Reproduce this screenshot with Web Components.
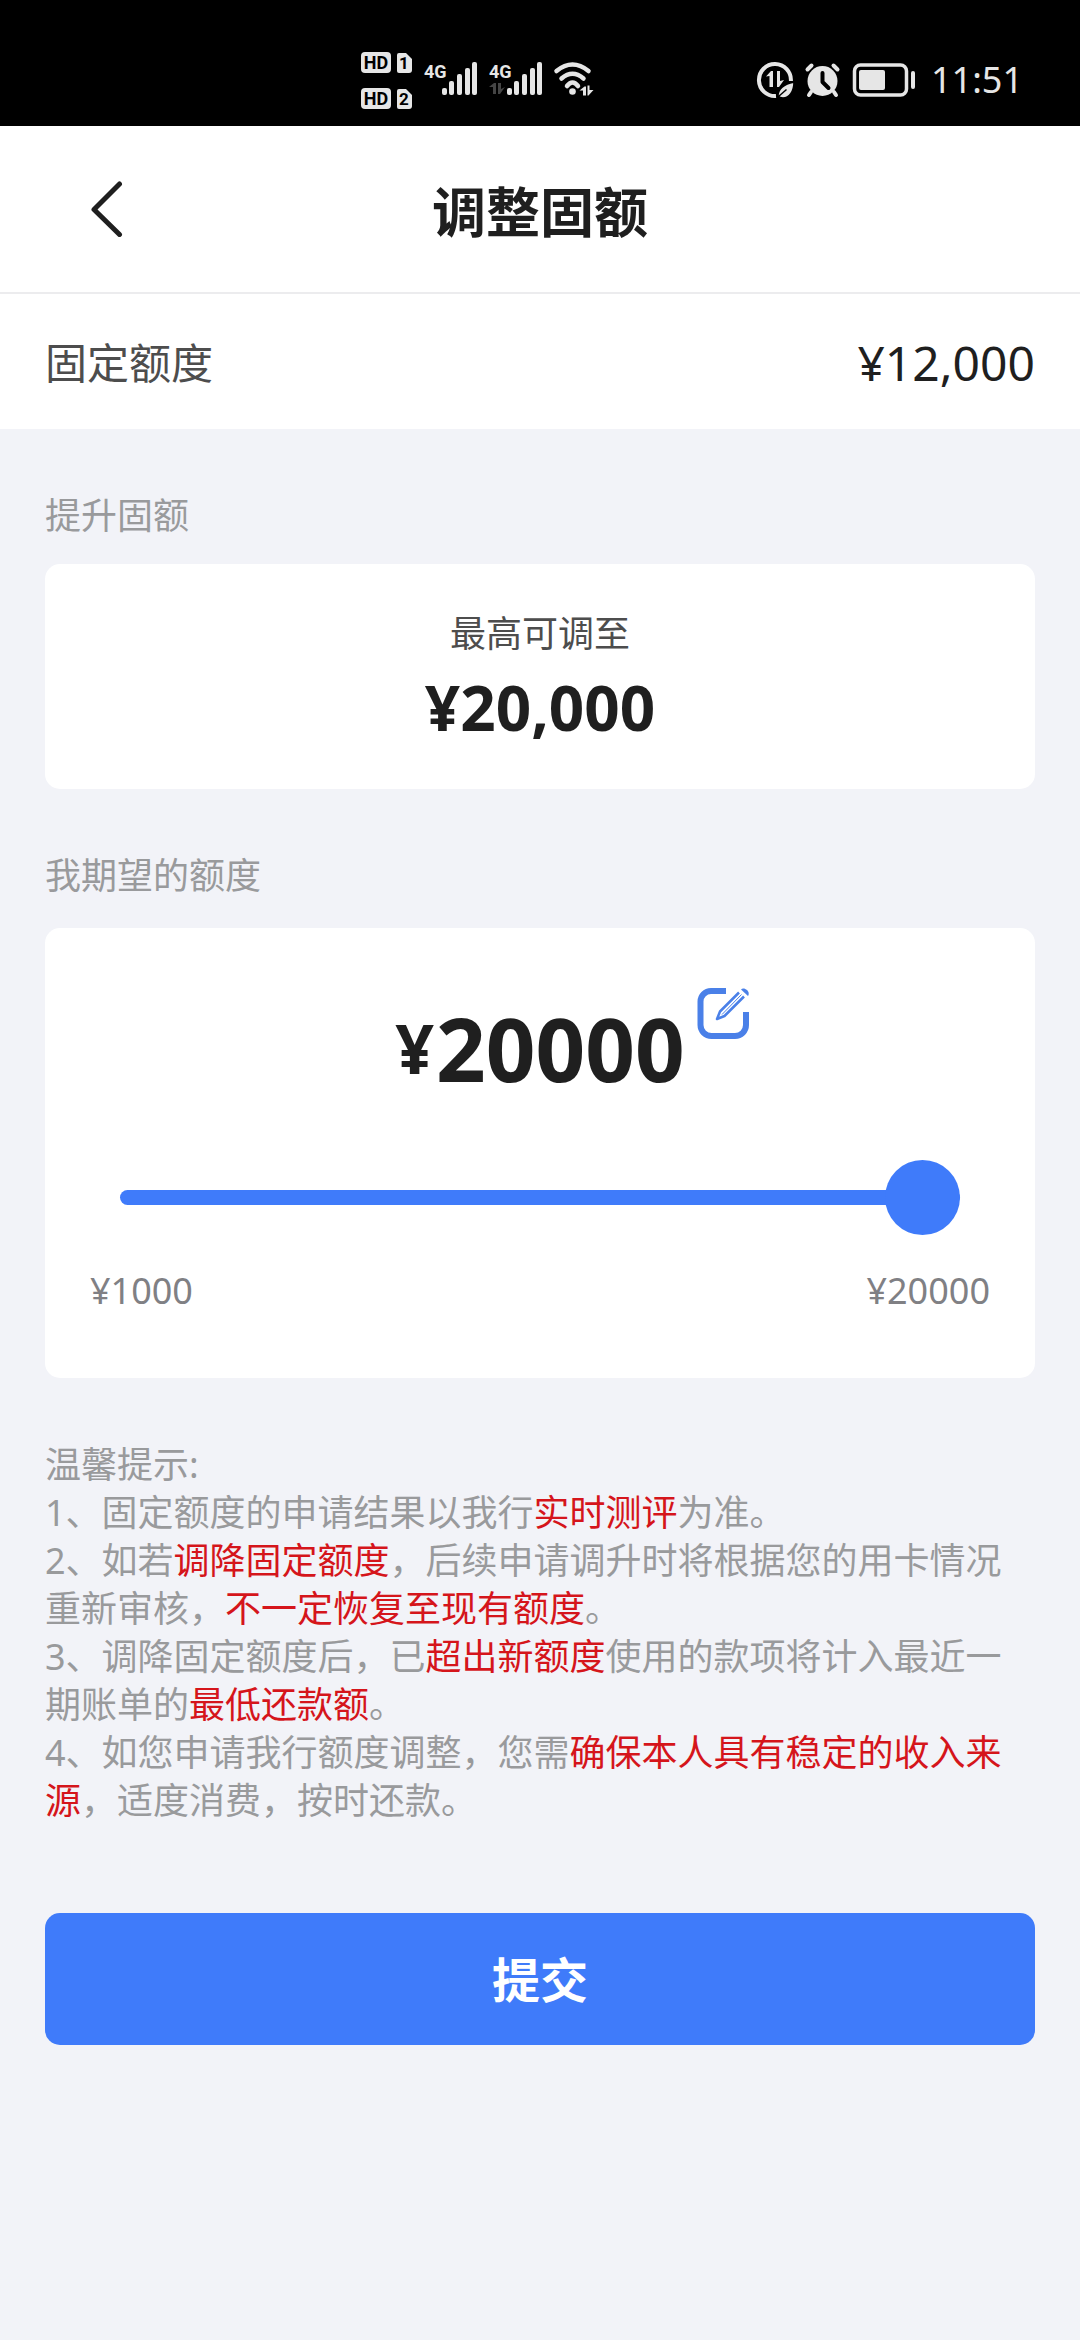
<!DOCTYPE html>
<html lang="zh-CN">
<head>
<meta charset="utf-8">
<meta name="viewport" content="width=device-width, initial-scale=1">
<title>调整固额</title>
<style>
  :root {
    --blue: #3f7bfa;
    --ink: #1f1f1f;
    --ink-soft: #4d4d4d;
    --muted: #999a9c;
    --red: #d5151b;
    --surface: #ffffff;
    --page: #f2f3f8;
    --gutter: 45px;
    --radius: 15px;
  }
  body {
    margin: 0;
    min-height: 100vh;
    background: var(--page);
    color: var(--ink);
    font: 36px/48px "Noto Sans", "Noto Sans CJK SC", sans-serif;
  }
</style>
</head>
<body>
<limit-page></limit-page>

<template id="status-bar">
  <style>
    :host { display: grid; grid-template-columns: 1fr 2fr; height: 92px; padding-top: 34px; background: #000; color: #e6e6e6; }
    .group { grid-column: 2; display: flex; align-items: center; justify-content: space-between; padding-right: 57px; }
    .side { display: flex; align-items: center; gap: 12px; }
    .sims { display: grid; gap: 15px; }
    svg { display: block; fill: currentColor; overflow: visible; }
    .line { fill: none; stroke: currentColor; stroke-linecap: round; stroke-linejoin: round; }
    text { font-family: "Liberation Sans Narrow", Roboto, sans-serif; font-weight: 700; }
    .cut { fill: #000; }
    time { padding-left: 3px; font-size: 36px; line-height: 48px; }
  </style>
  <div class="group">
    <div class="side">
      <div class="sims">
        <svg width="52" height="21" viewBox="0 0 52 21"><rect x="1" width="30" height="21" rx="4"/><text class="cut" x="16" y="17" font-size="18" text-anchor="middle">HD</text><path d="M39 1h7l6 6v11a3 3 0 0 1-3 3h-10a2 2 0 0 1-2-2V3a2 2 0 0 1 2-2z"/><text class="cut" x="44" y="17" font-size="17" text-anchor="middle">1</text></svg>
        <svg width="52" height="21" viewBox="0 0 52 21"><rect x="1" width="30" height="21" rx="4"/><text class="cut" x="16" y="17" font-size="18" text-anchor="middle">HD</text><path d="M39 1h7l6 6v11a3 3 0 0 1-3 3h-10a2 2 0 0 1-2-2V3a2 2 0 0 1 2-2z"/><text class="cut" x="44" y="17" font-size="17" text-anchor="middle">2</text></svg>
      </div>
      <svg width="53" height="40" viewBox="0 0 53 40"><text y="18" font-size="18">4G</text><g><rect x="18" y="28" width="5" height="7" rx="2"/><rect x="25" y="21" width="5" height="14" rx="2"/><rect x="33" y="14" width="5" height="21" rx="2"/><rect x="41" y="8" width="5" height="27" rx="2"/><rect x="48" y="2" width="5" height="33" rx="2"/></g></svg>
      <svg width="53" height="40" viewBox="0 0 53 40"><text y="18" font-size="18">4G</text><path fill="#444" d="M0 27l5-4h2v11H4v-7zM9 23h3v6l4-2-5 7H9z"/><g><rect x="18" y="28" width="5" height="7" rx="2"/><rect x="25" y="21" width="5" height="14" rx="2"/><rect x="33" y="14" width="5" height="21" rx="2"/><rect x="41" y="8" width="5" height="27" rx="2"/><rect x="48" y="2" width="5" height="33" rx="2"/></g></svg>
      <svg width="40" height="36" viewBox="0 2 40 36"><g class="line" stroke-width="4.500"><path d="M2.500 11Q18.500-2 34.500 11"/><path d="M7.500 18.500Q18.500 9 29.500 18.500"/><path d="M13 26Q18.500 19 24 26"/></g><circle cx="18.500" cy="31.500" r="3.300"/><path d="M25.500 30.500l5-4h1.500v9h-3v-5zM33.500 25.500h2v4.500h4l-5 5.500h-1z"/></svg>
    </div>
    <div class="side">
      <svg width="36" height="36" viewBox="0 0 36 36"><path class="line" stroke-width="4" style="stroke-linecap:butt" d="M19 34A16 16 0 1 1 33.900 19"/><path d="M9 14.500L14 9h2v16h-3.500V14zM20 9h3v10l4-1-5 7h-2z"/><path stroke="#000" stroke-width="1.500" d="M37 20c0 10-5 16-11 16-2 0-4-1-5-2 0-8 7-12 16-14z"/><path fill="none" stroke="#000" stroke-width="1.500" d="M21.500 34.500l8-7"/></svg>
      <svg width="35" height="36" viewBox="0 0 35 36"><circle cx="17.500" cy="19" r="15"/><g class="line" stroke-width="4"><path d="M2.500 7.500L6.500 3.500M28.500 3.500L32.500 7.500M6 30L4 33M29 30L31 33"/></g><path fill="none" stroke="#000" stroke-width="4" stroke-linecap="round" stroke-linejoin="round" d="M17.500 11v9l6 6"/></svg>
      <svg width="64" height="36" viewBox="0 0 64 36"><rect class="line" x="2.500" y="3" width="52" height="30" rx="6" stroke-width="3.500"/><rect x="7" y="8" width="26" height="20" rx="2"/><rect x="59" y="9" width="4" height="18" rx="2"/></svg>
      <time>11:51</time>
    </div>
  </div>
</template>

<template id="nav-bar">
  <style>
    :host { display: grid; grid-template-columns: 1fr auto 1fr; align-items: center; height: 166px; border-bottom: 2px solid #ececee; background: var(--surface); }
    button { display: flex; margin: 0; padding: 20px 45px 20px 90px; border: 0; background: none; color: inherit; justify-self: start; cursor: pointer; }
    h1 { margin: 0; padding-top: 5px; font-size: 54px; line-height: 72px; font-weight: 700; }
  </style>
  <button type="button" aria-label="返回"><svg width="34" height="56" viewBox="0 0 34 56" fill="none" stroke="currentColor" stroke-width="5" stroke-linecap="round" stroke-linejoin="round"><path d="M29.500 3L4 28.500l25.500 25"/></svg></button>
  <h1><slot></slot></h1>
</template>

<template id="limit-row">
  <style>
    :host { display: flex; align-items: center; justify-content: space-between; padding: 32px var(--gutter) 30px; background: var(--surface); font-size: 48px; line-height: 73px; }
    .name { font-size: 42px; color: var(--ink-soft); }
  </style>
  <span class="name"><slot name="name"></slot></span>
  <span><slot></slot></span>
</template>

<template id="limit-section">
  <style>
    :host { display: flex; flex-direction: column; gap: var(--heading-gap, 24px); }
    h2 { margin: 0; font-size: 36px; line-height: 48px; font-weight: 400; color: var(--muted); }
    .card { background: var(--surface); border-radius: var(--radius); }
  </style>
  <h2><slot name="heading"></slot></h2>
  <div class="card"><slot></slot></div>
</template>

<template id="max-limit">
  <style>
    :host { display: flex; flex-direction: column; align-items: center; gap: 12px; padding: 46px 45px 44px; }
    .caption { color: var(--ink-soft); }
    strong { font-size: 62px; line-height: 75px; }
  </style>
  <span class="caption"><slot name="caption"></slot></span>
  <strong><slot></slot></strong>
</template>

<template id="limit-picker">
  <style>
    :host { display: flex; flex-direction: column; padding: 45px 45px 63px; }
    .amount { display: grid; grid-template-columns: 1fr auto 1fr; font-weight: 700; line-height: 150px; }
    output { grid-column: 2; display: flex; font-size: 87px; }
    .sign { font-size: 68px; padding-right: 2px; }
    button { align-self: start; justify-self: start; display: flex; margin: 15px 0 0 12px; padding: 0; border: 0; background: none; color: #4a80e8; cursor: pointer; }
    input { appearance: none; -webkit-appearance: none; margin: 37px 30px 32px; height: 75px; background: none; cursor: pointer; }
    input::-webkit-slider-runnable-track { height: 15px; border-radius: 8px; background: var(--blue); }
    input::-webkit-slider-thumb { -webkit-appearance: none; width: 75px; height: 75px; margin-top: -30px; border: 0; border-radius: 50%; background: var(--blue); }
    .range { display: flex; justify-content: space-between; color: #808084; }
  </style>
  <div class="amount">
    <output for="range"><span class="sign">¥</span><span id="value">20000</span></output>
    <button type="button" aria-label="编辑额度"><svg width="53" height="53" viewBox="0 0 53 53" fill="none" stroke="currentColor"><path stroke-width="6" d="M29 3H14A10.500 10.500 0 0 0 3.500 13.500V37A11 11 0 0 0 14.500 48H38A11 11 0 0 0 49 37V24"/><path stroke-width="2.500" stroke-linejoin="round" d="M42 4.500L23 23.500l-3 7.500 7.500-3L47 8.500"/><path stroke-width="1" d="M25 26.500L44.500 6.500"/><path fill="currentColor" stroke="none" d="M44 1.500c3-3 10 2 7 6.500z"/></svg></button>
  </div>
  <input id="range" type="range" min="1000" max="20000" step="1000" value="20000" aria-label="我期望的额度">
  <div class="range"><span>¥1000</span><span>¥20000</span></div>
</template>

<template id="kind-tips">
  <style>
    :host { display: block; color: var(--muted); }
    p { margin: 0; }
    em { font-style: normal; color: var(--red); }
  </style>
  <p>温馨提示:</p>
  <p>1、固定额度的申请结果以我行<em>实时测评</em>为准。</p>
  <p>2、如若<em>调降固定额度</em>，后续申请调升时将根据您的用卡情况重新审核，<em>不一定恢复至现有额度</em>。</p>
  <p>3、调降固定额度后，已<em>超出新额度</em>使用的款项将计入最近一期账单的<em>最低还款额</em>。</p>
  <p>4、如您申请我行额度调整，您需<em>确保本人具有稳定的收入来源</em>，适度消费，按时还款。</p>
</template>

<template id="submit-button">
  <style>
    :host { display: block; }
    button { display: block; width: 100%; margin: 0; padding: 31px 30px 29px; border: 0; border-radius: var(--radius); background: var(--blue); color: #fff; font: inherit; font-size: 48px; line-height: 72px; font-weight: 700; cursor: pointer; }
  </style>
  <button type="button"><slot></slot></button>
</template>

<template id="limit-page">
  <style>
    :host { display: block; }
    main { display: flex; flex-direction: column; gap: 63px; padding: 63px var(--gutter); }
    .expect { --heading-gap: 28px; }
    submit-button { margin-top: 25px; }
  </style>
  <status-bar></status-bar>
  <nav-bar>调整固额</nav-bar>
  <limit-row><span slot="name">固定额度</span>¥12,000</limit-row>
  <main>
    <limit-section><span slot="heading">提升固额</span>
      <max-limit><span slot="caption">最高可调至</span>¥20,000</max-limit>
    </limit-section>
    <limit-section class="expect"><span slot="heading">我期望的额度</span>
      <limit-picker></limit-picker>
    </limit-section>
    <kind-tips></kind-tips>
    <submit-button>提交</submit-button>
  </main>
</template>

<script>
  class TemplateElement extends HTMLElement {
    constructor() {
      super();
      const template = document.getElementById(this.localName);
      this.attachShadow({ mode: "open" }).append(template.content.cloneNode(true));
    }
  }
  class StatusBar extends TemplateElement {}
  class NavBar extends TemplateElement {
    constructor() {
      super();
      this.shadowRoot.querySelector("button").addEventListener("click", () => history.back());
    }
  }
  class LimitRow extends TemplateElement {}
  class LimitSection extends TemplateElement {}
  class MaxLimit extends TemplateElement {}
  class LimitPicker extends TemplateElement {
    constructor() {
      super();
      const range = this.shadowRoot.getElementById("range");
      const value = this.shadowRoot.getElementById("value");
      range.addEventListener("input", () => { value.textContent = range.value; });
      this.shadowRoot.querySelector("button").addEventListener("click", () => range.focus());
    }
  }
  class KindTips extends TemplateElement {}
  class SubmitButton extends TemplateElement {}
  class LimitPage extends TemplateElement {}

  customElements.define("status-bar", StatusBar);
  customElements.define("nav-bar", NavBar);
  customElements.define("limit-row", LimitRow);
  customElements.define("limit-section", LimitSection);
  customElements.define("max-limit", MaxLimit);
  customElements.define("limit-picker", LimitPicker);
  customElements.define("kind-tips", KindTips);
  customElements.define("submit-button", SubmitButton);
  customElements.define("limit-page", LimitPage);
</script>
</body>
</html>
